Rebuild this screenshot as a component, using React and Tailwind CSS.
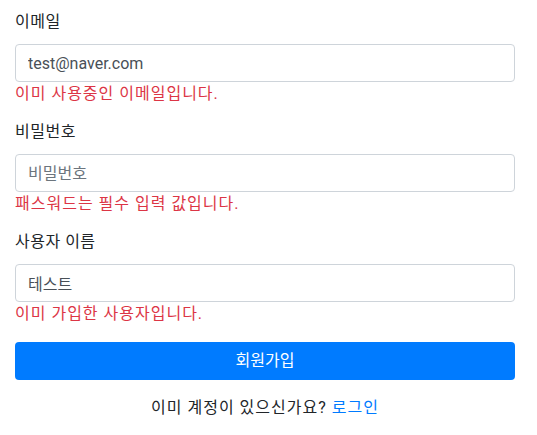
import React, { useState } from 'react';

const font = { fontFamily: '"Segoe UI", Roboto, "Noto Sans CJK KR", sans-serif' };

const Field = ({ label, name, type = 'text', value, placeholder, error, onChange }) => (
  <div className="mb-[14px]">
    <label htmlFor={name} className="block mb-[10px] text-base leading-6 text-[#212529] tracking-[0.5px]">
      {label}
    </label>
    <input
      id={name}
      name={name}
      type={type}
      value={value}
      placeholder={placeholder}
      onChange={onChange}
      className="block w-full h-[38px] px-3 border border-[#ced4da] rounded-[4px] text-base text-[#495057] placeholder-[#6c757d] focus:outline-none"
    />
    <div className="text-base leading-6 text-[#dc3545] tracking-[1px]">{error}</div>
  </div>
);

const App = () => {
  const [form, setForm] = useState({ email: 'test@naver.com', password: '', name: '테스트' });

  const onChange = (e) => setForm({ ...form, [e.target.name]: e.target.value });

  return (
    <div className="min-h-[435px] bg-white" style={font}>
      <form className="w-[500px] ml-[15px] pt-[10px]" onSubmit={(e) => e.preventDefault()}>
        <Field label="이메일" name="email" value={form.email} onChange={onChange} error="이미 사용중인 이메일입니다." />
        <Field
          label="비밀번호"
          name="password"
          type="password"
          value={form.password}
          placeholder="비밀번호"
          onChange={onChange}
          error="패스워드는 필수 입력 값입니다."
        />
        <Field label="사용자 이름" name="name" value={form.name} onChange={onChange} error="이미 가입한 사용자입니다." />
        <button
          type="submit"
          className="block w-full h-[38px] mt-[16px] rounded-[4px] bg-[#007bff] text-white text-base leading-6"
        >
          회원가입
        </button>
        <p className="mt-[16px] text-center text-base leading-6 text-[#212529] tracking-[1px]">
          이미 계정이 있으신가요? <a href="#" className="text-[#007bff]">로그인</a>
        </p>
      </form>
    </div>
  );
};

export default App;
